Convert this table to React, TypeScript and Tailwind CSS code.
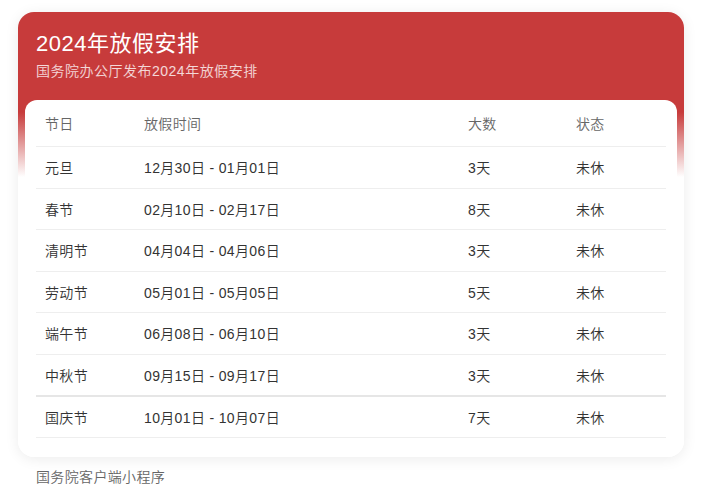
import React from "react";

const rows = [
  ["元旦", "12月30日 - 01月01日", "3天", "未休"],
  ["春节", "02月10日 - 02月17日", "8天", "未休"],
  ["清明节", "04月04日 - 04月06日", "3天", "未休"],
  ["劳动节", "05月01日 - 05月05日", "5天", "未休"],
  ["端午节", "06月08日 - 06月10日", "3天", "未休"],
  ["中秋节", "09月15日 - 09月17日", "3天", "未休"],
  ["国庆节", "10月01日 - 10月07日", "7天", "未休"],
];

export default function App() {
  return (
    <div
      className="w-[706px] h-[495px] bg-white px-[18px] pt-[12px] font-[350] tracking-[0.35px]"
      style={{ fontFamily: '"Liberation Sans", "Noto Sans CJK SC", sans-serif' }}
    >
      <div className="w-[666px] rounded-[16px] bg-[linear-gradient(to_bottom,#c73b3b_0px,#c73b3b_100px,#ffffff_165px)] shadow-[0_2px_14px_rgba(0,0,0,0.08)] pb-[7px]">
        <div className="px-[18px] pt-[18px] h-[88px]">
          <div className="text-[22px] leading-[28px] text-white font-normal tracking-[0.5px]">2024年放假安排</div>
          <div className="text-[14px] leading-[20px] text-white/80 mt-[3px] tracking-[0.5px]">国务院办公厅发布2024年放假安排</div>
        </div>
        <div className="mx-[7px] rounded-[12px] bg-white px-[11px] pb-[12px]">
          <div className="flex h-[47px] items-center border-b border-[#eeeeee] pt-[3px] text-[14px] text-[#666666]">
            <div className="w-[99px] pl-[9px]">节日</div>
            <div className="w-[324px] pl-[9px]">放假时间</div>
            <div className="w-[108px] pl-[9px]">大数</div>
            <div className="w-[98px] pl-[9px]">状态</div>
          </div>
          {rows.map((r, i) => (
            <div
              key={i}
              className={
                i === 5
                  ? "flex h-[42px] items-center border-b-2 border-[#e6e6e6] pt-[3px] text-[14px] text-[#333333]"
                  : "flex h-[41.5px] items-center border-b border-[#eeeeee] pt-[3px] text-[14px] text-[#333333]"
              }
            >
              <div className="w-[99px] pl-[9px]">{r[0]}</div>
              <div className="w-[324px] pl-[9px]">{r[1]}</div>
              <div className="w-[108px] pl-[9px]">{r[2]}</div>
              <div className="w-[98px] pl-[9px]">{r[3]}</div>
            </div>
          ))}
        </div>
      </div>
      <div className="pl-[18px] mt-[10px] text-[14px] leading-[20px] text-[#666666]">国务院客户端小程序</div>
    </div>
  );
}
